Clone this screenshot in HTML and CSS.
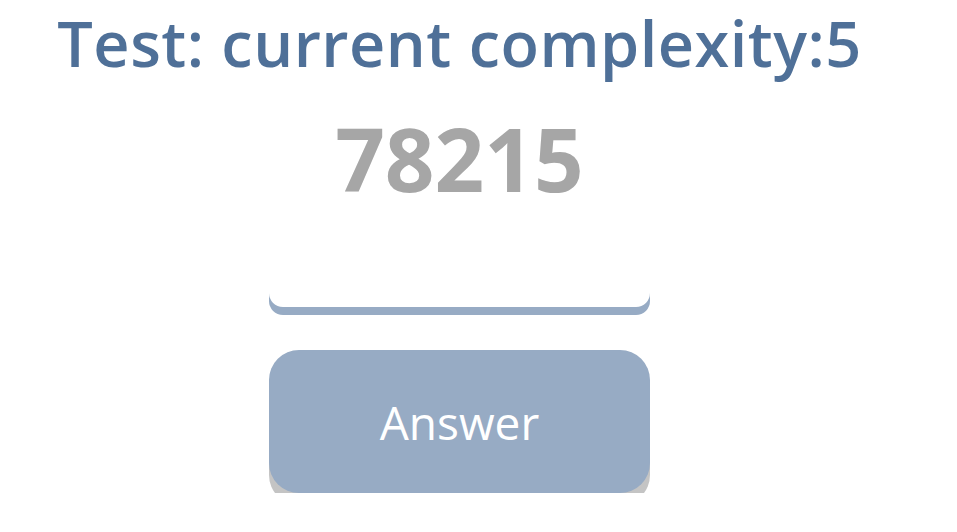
FILE: index.html
```html
<!DOCTYPE html>
<html>
<head>
<meta charset="utf-8">
<link rel="stylesheet" href="styles.css">
</head>
<body>
<main class="page">
  <h1 class="title">Test: current complexity:5</h1>
  <div class="number">78215</div>
  <div class="field"><input class="answer-input" type="text"></div>
  <button class="answer-btn">Answer</button>
</main>
</body>
</html>
```
FILE: styles.css
```css
html, body {
  margin: 0;
  padding: 0;
  background: #fff;
}
body {
  font-family: "Open Sans", "Noto Sans", sans-serif;
}
.page {
  width: 919px;
  display: flex;
  flex-direction: column;
  align-items: center;
}
.title {
  margin: 0;
  margin-top: 3px;
  font-size: 63px;
  font-weight: 600;
  color: #4f7098;
  line-height: 80px;
  letter-spacing: 0.5px;
  white-space: nowrap;
}
.number {
  margin-top: 25px;
  font-size: 87px;
  font-weight: 700;
  color: #a6a6a6;
  line-height: 100px;
}
.field {
  margin-top: 19px;
  width: 381px;
}
.answer-input {
  display: block;
  box-sizing: border-box;
  width: 100%;
  height: 80px;
  border: none;
  outline: none;
  background: #fff;
  border-radius: 0 0 14px 14px;
  box-shadow: 0 8px 0 #97abc4;
}
.answer-btn {
  margin-top: 43px;
  width: 381px;
  height: 143px;
  flex-shrink: 0;
  border: none;
  border-radius: 30px;
  background: #97abc4;
  color: #fff;
  font-family: "Open Sans", "Noto Sans", sans-serif;
  font-size: 46px;
  box-shadow: 0 12px 0 #c4c4c4;
  padding: 0;
}
```
